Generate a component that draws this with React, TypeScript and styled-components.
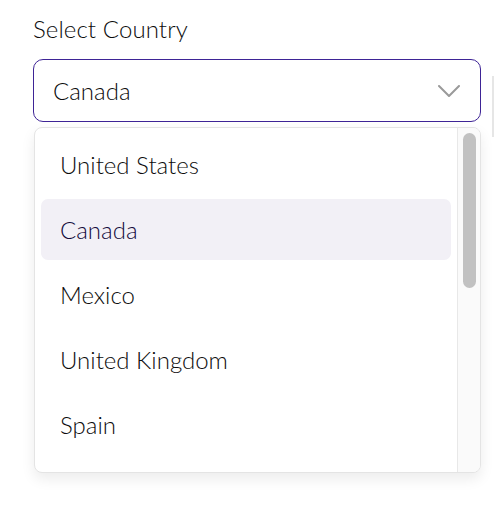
import React from "react";
import styled, { createGlobalStyle } from "styled-components";

const Global = createGlobalStyle`
  html, body { margin: 0; padding: 0; background: #ffffff; }
  body { font-family: "Lato", "Liberation Sans", sans-serif; }
  * { box-sizing: border-box; }
`;

const Page = styled.div`
  display: flex;
  gap: 11px;
  padding: 14px 0 0 33px;
  width: 495px;
  height: 512px;
  overflow: hidden;
`;

const Field = styled.div`
  display: flex;
  flex-direction: column;
  width: 448px;
  flex-shrink: 0;
`;

const Label = styled.label`
  font-size: 24px;
  font-weight: 300;
  line-height: 30px;
  color: #0c0c0c;
  letter-spacing: 0.1px;
`;

const Trigger = styled.button`
  margin-top: 15px;
  height: 63px;
  width: 448px;
  display: flex;
  align-items: center;
  justify-content: space-between;
  padding: 0 20px 0 19px;
  border: 1.5px solid #3e2496;
  border-radius: 10px;
  background: #ffffff;
  font-family: inherit;
  font-size: 24px;
  font-weight: 300;
  color: #0c0c0c;
  text-align: left;
  cursor: pointer;
`;

const Chevron = styled.svg`
  width: 22px;
  height: 12px;
  flex-shrink: 0;
`;

const Menu = styled.div`
  margin: 5px 0 0 1px;
  width: 447px;
  height: 346px;
  display: flex;
  overflow: hidden;
  border: 1px solid #e4e4e4;
  border-radius: 8px;
  background: #ffffff;
  box-shadow: 0 6px 14px rgba(0, 0, 0, 0.08);
`;

const List = styled.ul`
  list-style: none;
  margin: 0;
  padding: 6px;
  flex: 1;
  display: flex;
  flex-direction: column;
  gap: 4px;
`;

const Option = styled.li<{ $selected?: boolean }>`
  flex-shrink: 0;
  height: 61px;
  display: flex;
  align-items: center;
  padding-left: 19px;
  border-radius: 7px;
  font-size: 24px;
  font-weight: 300;
  color: ${(p) => (p.$selected ? "#120b3c" : "#0c0c0c")};
  background: ${(p) => (p.$selected ? "#f2f0f6" : "transparent")};
`;

const ScrollTrack = styled.div`
  width: 23px;
  flex-shrink: 0;
  background: #fafafa;
  border-left: 1px solid #e8e8e8;
  padding: 5px 4px 0 5px;
`;

const ScrollThumb = styled.div`
  height: 155px;
  border-radius: 7px;
  background: #c1c1c1;
`;

const Neighbour = styled.div`
  margin-top: 62px;
  width: 40px;
  height: 61px;
  border-left: 2px solid #e6e6e6;
  flex-shrink: 0;
`;

const countries = ["United States", "Canada", "Mexico", "United Kingdom", "Spain"];

export default function App() {
  const selected = "Canada";
  return (
    <>
      <Global />
      <Page>
        <Field>
          <Label>Select Country</Label>
          <Trigger type="button">
            <span>{selected}</span>
            <Chevron viewBox="0 0 22 12" fill="none">
              <path
                d="M1 1 L11 11 L21 1"
                stroke="#9a9a9a"
                strokeWidth="2"
                strokeLinecap="round"
                strokeLinejoin="round"
              />
            </Chevron>
          </Trigger>
          <Menu>
            <List role="listbox">
              {countries.map((c) => (
                <Option key={c} $selected={c === selected} role="option">
                  {c}
                </Option>
              ))}
            </List>
            <ScrollTrack>
              <ScrollThumb />
            </ScrollTrack>
          </Menu>
        </Field>
        <Neighbour />
      </Page>
    </>
  );
}
